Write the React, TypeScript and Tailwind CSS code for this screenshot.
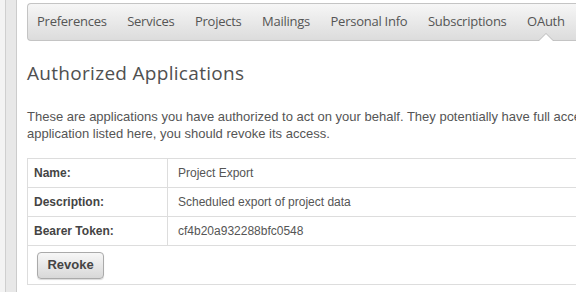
import React from "react";

const tabs = ["Preferences", "Services", "Projects", "Mailings", "Personal Info", "Subscriptions", "OAuth"];

const rows: [string, string][] = [
  ["Name:", "Project Export"],
  ["Description:", "Scheduled export of project data"],
  ["Bearer Token:", "cf4b20a932288bfc0548"],
];

export default function App() {
  return (
    <div className="flex w-[576px] h-[292px] overflow-hidden bg-white">
      <div className="w-[5px] shrink-0 bg-[#f3f3f3]" />
      <div className="w-px shrink-0 bg-[#cfcfcf]" />
      <div className="w-[10px] shrink-0 bg-[#e8e8e8]" />
      <div className="w-px shrink-0 bg-[#cccccc]" />
      <div className="flex-1 min-w-0 pl-[10px] pt-[3px]">
        <div className="w-[700px]">
          <div
            className="relative flex h-[38px] items-center rounded-l-[4px] border border-r-0 border-[#c4c4c4] bg-gradient-to-b from-[#f6f6f6] to-[#dcdcdc] text-[13px] tracking-[-0.25px] text-[#555]"
            style={{ fontFamily: '"Open Sans", "Noto Sans", sans-serif' }}
          >
            {tabs.map((t) => (
              <div key={t} className="relative px-[10.25px] first:pl-[9px] whitespace-nowrap">
                {t}
                {t === "OAuth" && (
                  <div className="absolute left-1/2 top-[21px] -translate-x-1/2">
                    <div className="w-0 h-0 border-x-[8px] border-x-transparent border-b-[8px] border-b-[#bbbbbb]" />
                    <div className="absolute left-[1px] top-[1px] w-0 h-0 border-x-[7px] border-x-transparent border-b-[7px] border-b-white" />
                  </div>
                )}
              </div>
            ))}
          </div>

          <h1
            className="mt-[20px] text-[19px] leading-[24px] font-medium text-[#505050] tracking-[0.3px]"
            style={{ fontFamily: '"Open Sans", "Noto Sans", sans-serif' }}
          >
            Authorized Applications
          </h1>

          <p
            className="mt-[23px] text-[13px] leading-[17px] text-[#555]"
            style={{ fontFamily: '"Liberation Sans", Arial, sans-serif' }}
          >
            These are applications you have authorized to act on your behalf. They potentially have full access to your
            <br />
            application listed here, you should revoke its access.
          </p>

          <div
            className="mt-[16px] border border-[#dddddd] text-[12px] text-[#444]"
            style={{ fontFamily: '"Liberation Sans", Arial, sans-serif' }}
          >
            {rows.map(([k, v]) => (
              <div key={k} className="flex h-[29px] border-b border-[#dddddd]">
                <div className="w-[140px] shrink-0 border-r border-[#dddddd] pl-[6px] flex items-center font-bold text-[#444]">
                  {k}
                </div>
                <div className="flex items-center pl-[10px] text-[#555]">{v}</div>
              </div>
            ))}
            <div className="h-[38px] flex items-center pl-[9px]">
              <button className="h-[27px] w-[67px] rounded-[4px] border border-[#aaaaaa] bg-gradient-to-b from-[#f7f7f7] to-[#d8d8d8] font-bold text-[13px] text-[#444] shadow-[0_1px_1px_rgba(0,0,0,0.15)]">
                Revoke
              </button>
            </div>
          </div>
        </div>
      </div>
    </div>
  );
}
